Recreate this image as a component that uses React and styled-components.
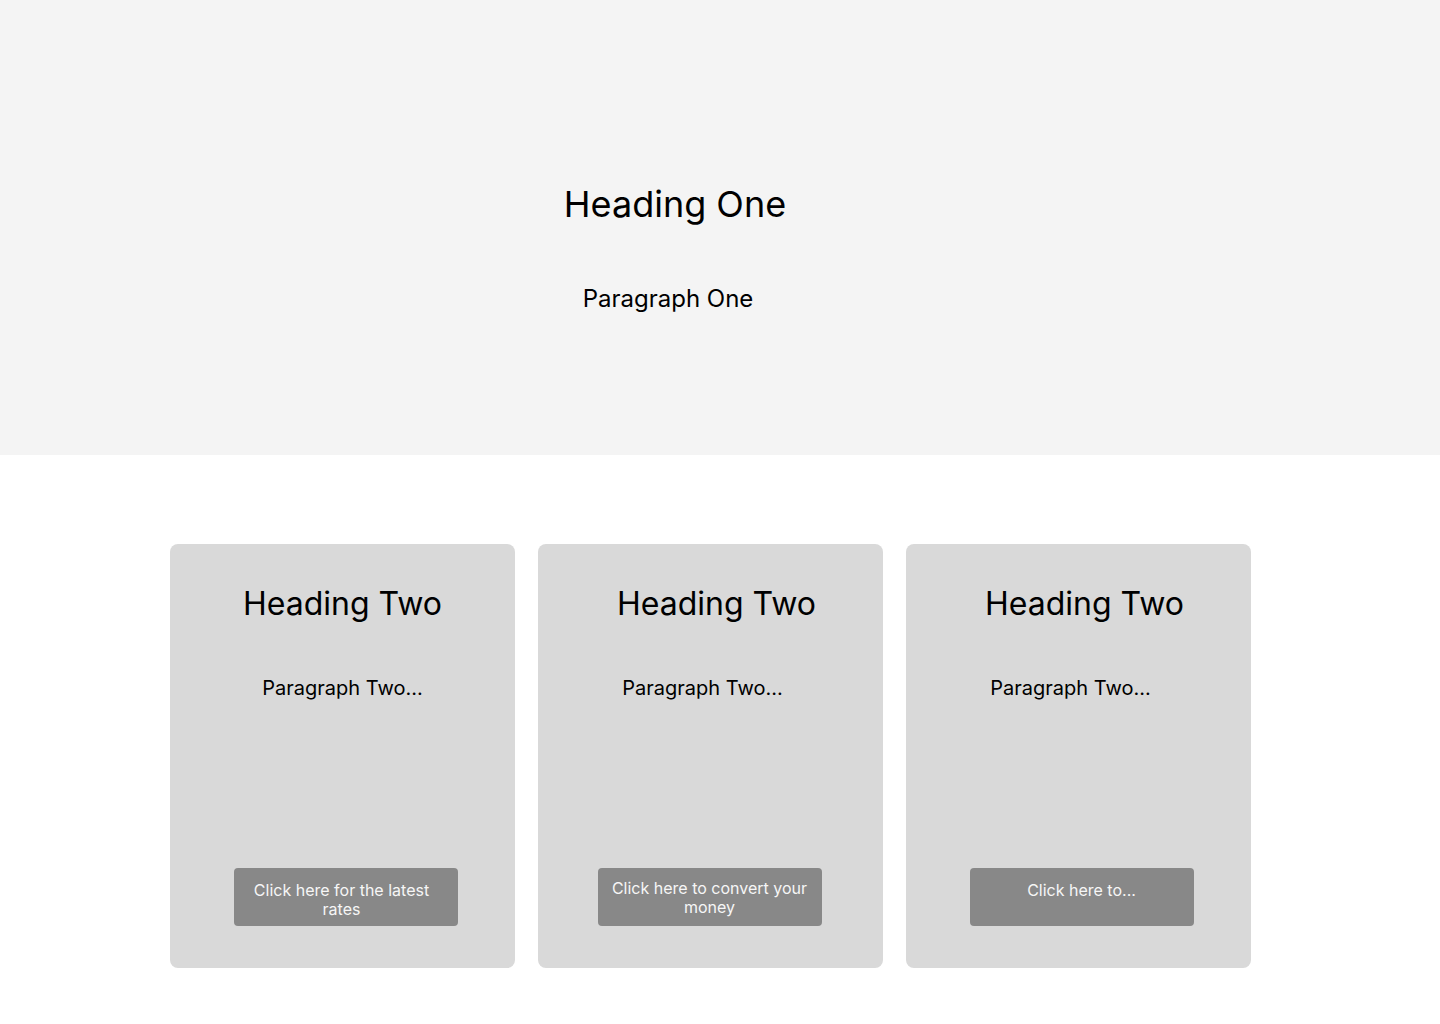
import React from "react";
import styled, { createGlobalStyle } from "styled-components";

const GlobalStyle = createGlobalStyle`
  body {
    margin: 0;
    background: #ffffff;
    font-family: Inter, "Noto Sans", sans-serif;
    color: #000000;
  }
`;

const Hero = styled.section`
  height: 455px;
  background: #f4f4f4;
  display: flex;
  flex-direction: column;
  align-items: center;
  padding-top: 182px;
  box-sizing: border-box;
`;

const HeroTitle = styled.h1`
  margin: 0;
  font-size: 36px;
  line-height: 44px;
  font-weight: 400;
  transform: translateX(-45px);
`;

const HeroText = styled.p`
  margin: 58px 0 0;
  font-size: 24px;
  line-height: 29px;
  font-weight: 400;
  transform: translateX(-52px);
`;

const CardRow = styled.div`
  display: flex;
  gap: 23px;
  padding: 89px 0 0 170px;
`;

const Card = styled.div`
  width: 345px;
  height: 424px;
  box-sizing: border-box;
  background: #d9d9d9;
  border-radius: 8px;
  display: flex;
  flex-direction: column;
  align-items: center;
  padding: 40px 0 42px;
`;

const CardTitle = styled.h2`
  margin: 0;
  font-size: 32px;
  line-height: 40px;
  font-weight: 400;
  transform: translateX(${(p) => p.$shift}px);
`;

const CardText = styled.p`
  margin: 52px 0 0;
  font-size: 20px;
  line-height: 24px;
  font-weight: 400;
  transform: translateX(${(p) => p.$shift}px);
`;

const CardButton = styled.button`
  margin-top: auto;
  width: 224px;
  height: 58px;
  box-sizing: border-box;
  border: none;
  border-radius: 4px;
  background: #888888;
  color: #f6f6f6;
  font-family: Inter, "Noto Sans", sans-serif;
  font-size: 16px;
  line-height: 19px;
  padding: ${(p) => p.$top}px ${(p) => 12 + p.$inset}px 0 ${(p) => 12 - p.$inset}px;
  display: flex;
  justify-content: center;
  align-items: flex-start;
  text-align: center;
  transform: translateX(${(p) => p.$shift}px);
`;

const cards = [
  { label: "Click here for the latest rates", title: 0, text: 0, button: 3, top: 13, inset: 4 },
  { label: "Click here to convert your money", title: 6, text: -8, button: -1, top: 11, inset: 0 },
  { label: "Click here to...", title: 6, text: -8, button: 3, top: 13, inset: 0 },
];

export default function App() {
  return (
    <>
      <GlobalStyle />
      <Hero>
        <HeroTitle>Heading One</HeroTitle>
        <HeroText>Paragraph One</HeroText>
      </Hero>
      <CardRow>
        {cards.map((c, i) => (
          <Card key={i}>
            <CardTitle $shift={c.title}>Heading Two</CardTitle>
            <CardText $shift={c.text}>Paragraph Two...</CardText>
            <CardButton $shift={c.button} $top={c.top} $inset={c.inset}>
              {c.label}
            </CardButton>
          </Card>
        ))}
      </CardRow>
    </>
  );
}
